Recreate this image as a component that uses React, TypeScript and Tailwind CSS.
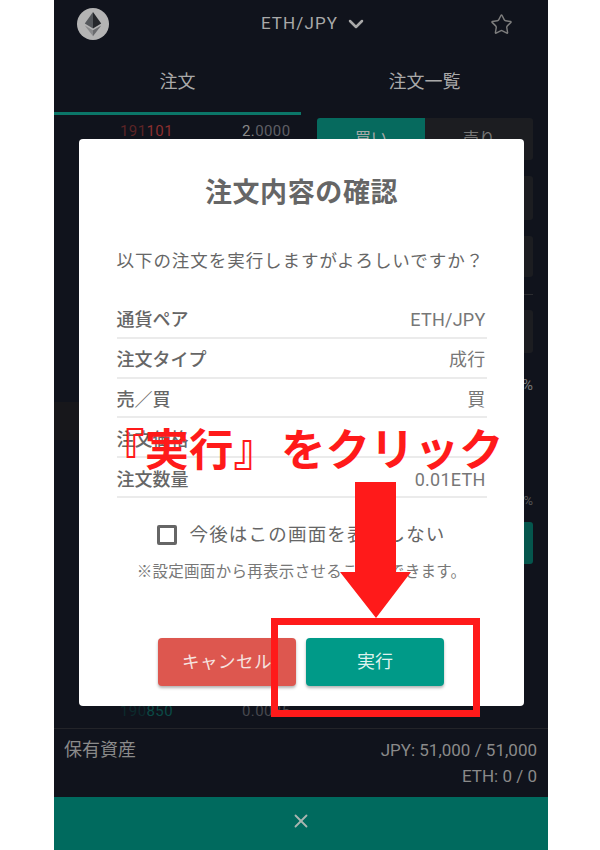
import { ChevronDown, Star, X } from "lucide-react";

const confirmRows = [
  { label: "通貨ペア", value: "ETH/JPY" },
  { label: "注文タイプ", value: "成行" },
  { label: "売／買", value: "買" },
  { label: "注文価格", value: "" },
  { label: "注文数量", value: "0.01ETH" },
];

const EthLogo = () => (
  <svg width="32" height="32" viewBox="0 0 32 32">
    <circle cx="16" cy="16" r="16" fill="#b4b4b4" />
    <path d="M16 4v16.4L7.8 15.6z" fill="#55585c" />
    <path d="M16 4v16.4l8.2-4.8z" fill="#26282c" />
    <path d="M16 22.2v6L7.8 17.4z" fill="#8a8b8d" />
    <path d="M16 22.2v6l8.2-10.8z" fill="#6a6b6e" />
  </svg>
);

const Background = () => (
  <div className="flex h-full flex-col bg-[#10131c] text-[#a9a9a9]">
    <div className="flex h-[50px] items-center pr-[35px] pb-[2px] pl-[23px]">
      <EthLogo />
      <div className="flex flex-1 items-center justify-center gap-[6px] pl-[30px]">
        <span className="text-[17px] tracking-[1.1px]">ETH/JPY</span>
        <ChevronDown size={24} strokeWidth={2.5} />
      </div>
      <Star size={23} strokeWidth={1.5} className="text-[#7d7d7d]" />
    </div>
    <div className="flex h-[65px]">
      <div className="flex w-[247px] flex-col">
        <div className="flex flex-1 items-center justify-center text-[18px]">注文</div>
        <div className="h-[3px] bg-[#0b7668]" />
      </div>
      <div className="flex flex-1 items-center justify-center pb-[3px] text-[18px]">注文一覧</div>
    </div>
    <div className="flex h-[613px]">
      <div className="relative flex w-[263px] flex-col justify-between pt-[5px] pb-[6px]">
        <div className="flex pl-[66px] text-[15px] tracking-[0.4px]">
          <span className="w-[122px] text-[#5b2426]">191<span className="text-[#8a2e2e]">101</span></span>
          <span className="text-[#5e5f65]"><span className="text-[#8a8a8a]">2.</span>0000</span>
        </div>
        <div className="flex pl-[66px] text-[15px] tracking-[0.4px]">
          <span className="w-[122px] text-[#0c2a2c]">190<span className="text-[#0b4a46]">850</span></span>
          <span className="text-[#47484e]">0.0085</span>
        </div>
        <div className="absolute top-[287px] left-0 h-[38px] w-[26px] bg-[#17171b]" />
      </div>
      <div className="flex w-[216px] flex-col pt-[3px]">
        <div className="flex h-[42px] text-[16px]">
          <div className="flex w-[108px] items-center justify-center rounded-l-[3px] bg-[#066a5e]">買い</div>
          <div className="flex w-[108px] items-center justify-center rounded-r-[3px] bg-[#1c1d21] text-[#777]">売り</div>
        </div>
        <div className="mt-[16px] h-[44px] rounded-[3px] bg-[#1c1d21]" />
        <div className="mt-[16px] h-[41px] rounded-[3px] bg-[#1c1d21]" />
        <div className="mt-[17px] h-px bg-[#2b2c30]" />
        <div className="mt-[15px] h-[43px] rounded-[3px] bg-[#1c1d21]" />
        <div className="mt-[23px] text-right text-[15px] leading-[18px] text-[#777]">%</div>
        <div className="mt-[98px] text-right text-[13px] leading-[18px] text-[#555]">%</div>
        <div className="mt-[12px] h-[42px] rounded-[3px] bg-[#05564d]" />
      </div>
    </div>
    <div className="flex h-[69px] justify-between border-t border-[#232429] pt-[9px] pr-[11px] pl-[10px] text-[#8a8a8a]">
      <span className="text-[18px] leading-[24px]">保有資産</span>
      <div className="flex flex-col items-end text-[17px] leading-[29px]">
        <span className="leading-[24px]">JPY: 51,000 / 51,000</span>
        <span>ETH: 0 / 0</span>
      </div>
    </div>
    <div className="flex flex-1 items-center justify-center bg-[#006a5e] pb-[5px] text-[#a9b5b0]">
      <X size={22} strokeWidth={2} />
    </div>
  </div>
);

const ConfirmDialog = () => (
  <div className="absolute top-[139px] left-[25px] flex h-[567px] w-[445px] flex-col items-center rounded-[4px] bg-white text-[#666]">
    <h2 className="mt-[36px] text-[27px] leading-[36px] font-bold tracking-[0.6px]">注文内容の確認</h2>
    <p className="mt-[37px] w-[370px] text-[17.5px] leading-[26px] tracking-[0.95px]">以下の注文を実行しますがよろしいですか？</p>
    <div className="mt-[25px] w-[370px]">
      {confirmRows.map((row) => (
        <div key={row.label} className="flex h-[39.8px] items-center justify-between border-b-2 border-[#ebebeb] pt-[4px] pr-[1px] text-[18px]">
          <span className="font-medium">{row.label}</span>
          <span className="tracking-[0.25px] text-[#777]">{row.value}</span>
        </div>
      ))}
    </div>
    <label className="mt-[24px] flex items-center gap-[12px]">
      <span className="h-[20px] w-[20px] rounded-[2px] border-[3px] border-[#666]" />
      <span className="text-[18.5px] leading-[26px] tracking-[1.2px]">今後はこの画面を表示しない</span>
    </label>
    <p className="mt-[13px] text-[15.5px] leading-[22px] tracking-[0.3px] text-[#777]">※設定画面から再表示させることもできます。</p>
    <div className="mt-[55px] flex gap-[10px] pr-[1px]">
      <button type="button" className="h-[48px] w-[138px] rounded-[4px] bg-[#dd574f] text-[17.5px] tracking-[0.5px] text-[#f6e3e0] shadow-[0_2px_3px_rgba(0,0,0,0.3)]">キャンセル</button>
      <button type="button" className="h-[48px] w-[138px] rounded-[4px] bg-[#009a88] text-[18px] text-[#dff2ee] shadow-[0_2px_3px_rgba(0,0,0,0.3)]">実行</button>
    </div>
  </div>
);

export default function App() {
  return (
    <div className="relative h-[850px] w-[600px] overflow-hidden bg-white font-['Roboto','Noto_Sans_CJK_JP',sans-serif]">
      <div className="relative ml-[54px] h-full w-[494px]">
        <Background />
        <ConfirmDialog />
      </div>
      {/* red annotation added on top of the screenshot */}
      <div className="absolute top-[421px] left-[100px] flex gap-[3px] text-[44.5px] leading-[60px] font-bold whitespace-nowrap text-[#ff1a1a]">
        <span>『実行』</span>
        <span>をクリック</span>
      </div>
      <svg className="absolute top-[482px] left-[340px]" width="71" height="136" viewBox="0 0 71 136">
        <path d="M15 0h41v90h15L36 136 0 90h15z" fill="#ff1a1a" />
      </svg>
      <div className="absolute top-[618px] left-[271px] h-[99px] w-[209px] border-[7px] border-[#ff1a1a]" />
    </div>
  );
}
